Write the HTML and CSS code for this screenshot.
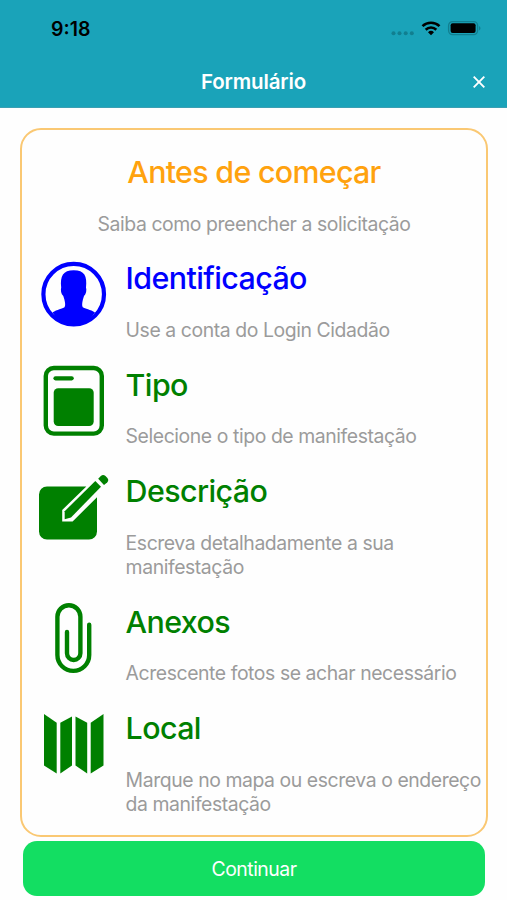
FILE: index.html
```html
<!DOCTYPE html>
<html lang="pt-BR">
<head>
  <meta charset="UTF-8" />
  <meta name="viewport" content="width=device-width, initial-scale=1.0" />
  <title>Formulário</title>
  <link rel="stylesheet" href="styles.css">
</head>
<body>
  <header class="header">
    <div class="status-bar">
      <span class="time">9:18</span>
      <svg class="status-icons" width="92" height="20" viewBox="0 0 92 20">
        <g fill="#117f90">
          <circle cx="3.5" cy="13.2" r="2" />
          <circle cx="9.5" cy="13.2" r="2" />
          <circle cx="15.7" cy="13.2" r="2" />
          <circle cx="21.8" cy="13.2" r="2" />
        </g>
        <g fill="none" stroke="#000" stroke-width="2.6">
          <path d="M32.5 6.1a12.4 12.4 0 0 1 17 0" />
          <path d="M35.7 9.7a7.6 7.6 0 0 1 10.6 0" />
        </g>
        <path d="M38 12.2a4.3 4.3 0 0 1 6 0L41 15.3z" />
        <rect x="58.6" y="1.6" width="29" height="13" rx="4" fill="none" stroke="#117f90" stroke-width="1.3" />
        <rect x="60.6" y="3.3" width="25" height="9.8" rx="2" />
        <path d="M89 6v4.4c2-.8 2-3.6 0-4.4z" fill="#117f90" />
      </svg>
    </div>
    <div class="nav-bar">
      <h1>Formulário</h1>
      <button class="close" aria-label="Fechar">
        <svg width="12" height="12" viewBox="0 0 12 12"><path d="M.7.7l10.6 10.6M11.3.7L.7 11.3" stroke="#fff" stroke-width="1.9" /></svg>
      </button>
    </div>
  </header>

  <main class="card">
    <h2>Antes de começar</h2>
    <p class="subtitle">Saiba como preencher a solicitação</p>

    <ul class="steps">
      <li class="step step-active">
        <svg class="icon" viewBox="0 0 72 76">
          <circle cx="35.7" cy="36.2" r="30.3" fill="none" stroke="currentColor" stroke-width="4.2" />
          <path d="M14.5 54.5C19 51.5 24.5 51 26.5 49.3C28 47 26.8 42.5 25.3 38C23 36 22.5 32 23.2 29.5C22 18 25 12.2 35.7 12.2C46.5 12.2 49.3 18 48 29.5C48.8 32 48.2 36 46 38C44.5 42.5 43.5 47 44.8 49.3C47 51 52.5 51.5 57 54.5C45 71 26 71 14.5 54.5Z" />
        </svg>
        <div class="step-text">
          <h3>Identificação</h3>
          <p>Use a conta do Login Cidadão</p>
        </div>
      </li>
      <li class="step">
        <svg class="icon" viewBox="0 0 72 76">
          <rect x="7.8" y="3" width="56" height="65.6" rx="8" fill="none" stroke="currentColor" stroke-width="4.4" />
          <path d="M17.5 13.3h16.2" stroke="currentColor" stroke-width="4.2" stroke-linecap="round" />
          <rect x="15.7" y="23.2" width="40" height="37.8" rx="4.5" />
        </svg>
        <div class="step-text">
          <h3>Tipo</h3>
          <p>Selecione o tipo de manifestação</p>
        </div>
      </li>
      <li class="step">
        <svg class="icon" viewBox="0 0 72 76">
          <path d="M9 15.5H48.3L24.2 39V50.5H34.6L59 26.2V60.5a8 8 0 0 1-8 8H9a8 8 0 0 1-8-8V23.5a8 8 0 0 1 8-8z" />
          <path d="M26.7 40.2L57.3 10L63 15.7L33 46.5L26.7 48.2z" />
          <path d="M60.2 7.7L62.8 5a3.5 3.5 0 0 1 4.7 0l1.7 1.7a3.5 3.5 0 0 1 0 4.7L66 14z" />
        </svg>
        <div class="step-text">
          <h3>Descrição</h3>
          <p>Escreva detalhadamente a sua manifestação</p>
        </div>
      </li>
      <li class="step">
        <svg class="icon" viewBox="0 0 72 76">
          <path d="M29 30V51.3a6.7 6.7 0 0 0 13.4 0V14.8a11.5 11.5 0 0 0-23 0V53a15.9 15.9 0 0 0 31.8 0V22.8" fill="none" stroke="currentColor" stroke-width="4.4" stroke-linecap="round" />
        </svg>
        <div class="step-text">
          <h3>Anexos</h3>
          <p>Acrescente fotos se achar necessário</p>
        </div>
      </li>
      <li class="step">
        <svg class="icon" viewBox="0 0 72 76">
          <path d="M6 6L18.7 14.7V65.5L6 57.5z" />
          <path d="M22.3 14.7L34 8.5V57.5L22.3 65.5z" />
          <path d="M37.5 8.5L49.2 14.7V65.5L37.5 57.5z" />
          <path d="M52.7 14.7L65.5 6V57.5L52.7 65.5z" />
        </svg>
        <div class="step-text">
          <h3>Local</h3>
          <p>Marque no mapa ou escreva o endereço da manifestação</p>
        </div>
      </li>
    </ul>
  </main>

  <button class="continue">Continuar</button>
</body>
</html>
```
FILE: styles.css
```css
* {
  box-sizing: border-box;
}

body {
  margin: 0;
  height: 900px;
  background-color: #fefefe;
  font-family: Inter, 'Liberation Sans', sans-serif;
  overflow: hidden;
}

h1, h2, h3, p {
  margin: 0;
}

.header {
  height: 108px;
  background-color: #1aa3b9;
  border-bottom: 1px solid #3c9fb2;
}

.status-bar {
  display: flex;
  justify-content: space-between;
  align-items: flex-start;
  height: 56px;
  padding: 17px 25px 0 51px;
}

.time {
  font-size: 19.5px;
  line-height: 24px;
  font-weight: 600;
}

.status-icons {
  margin-top: 3px;
}

.nav-bar {
  display: grid;
  grid-template-columns: 1fr auto 1fr;
  align-items: center;
  height: 51px;
  padding: 0 22px;
}

.nav-bar h1 {
  grid-column: 2;
  color: #fff;
  font-size: 20.5px;
  font-weight: 600;
  letter-spacing: -0.15px;
}

.close {
  justify-self: end;
  display: flex;
  padding: 0;
  border: none;
  background: none;
}

.card {
  width: 468px;
  height: 709px;
  margin: 20px 0 0 20px;
  padding-top: 23px;
  border: 2px solid #fac873;
  border-radius: 21px;
}

.card h2 {
  color: #ffa20e;
  font-size: 30.4px;
  font-weight: 500;
  line-height: 38px;
  letter-spacing: -0.7px;
  text-align: center;
}

.subtitle,
.step p {
  color: #9b9b9b;
  font-size: 19.4px;
  line-height: 24.4px;
  letter-spacing: -0.42px;
}

.subtitle {
  margin-top: 21px;
  text-align: center;
}

.steps {
  display: flex;
  flex-direction: column;
  gap: 24.6px;
  list-style: none;
  margin: 24px 0 0;
  padding: 0 0 0 16px;
}

.step {
  display: flex;
  gap: 15.6px;
  color: #008000;
}

.step-active {
  color: #0000ff;
}

.icon {
  flex: none;
  width: 72px;
  height: 76px;
  margin-top: -2px;
  fill: currentColor;
}

.step h3 {
  font-size: 30.4px;
  font-weight: 500;
  line-height: 36px;
  letter-spacing: -0.6px;
  margin-bottom: 21.4px;
}

.continue {
  display: block;
  width: 462px;
  height: 55px;
  margin: 4px 0 0 23px;
  border: none;
  border-radius: 14px;
  background-color: #13de62;
  color: #fff;
  font-family: inherit;
  font-size: 19.4px;
  letter-spacing: -0.5px;
}
```
